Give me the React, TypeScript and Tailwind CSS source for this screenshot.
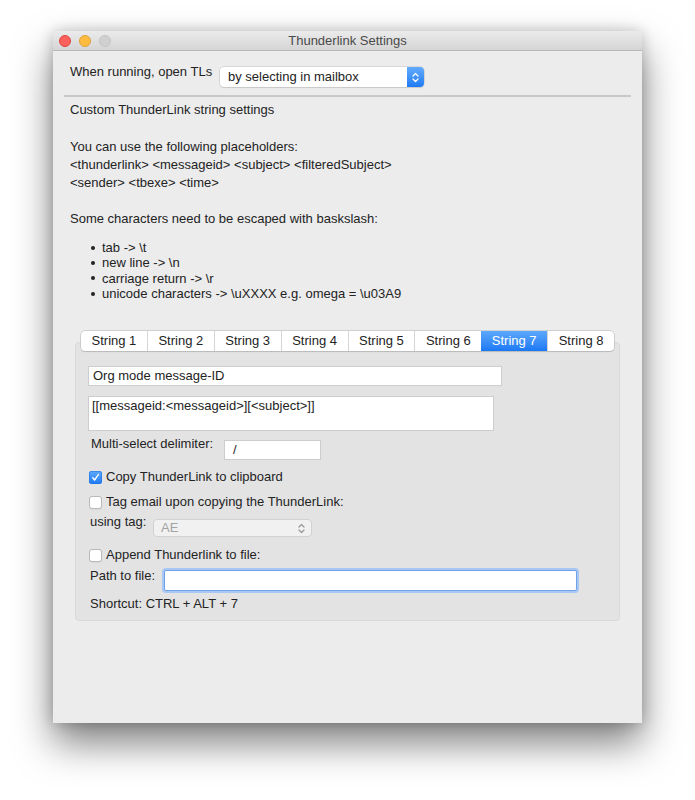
import React from "react";

const tabs = ["String 1", "String 2", "String 3", "String 4", "String 5", "String 6", "String 7", "String 8"];

const escapes = [
  "tab -> \\t",
  "new line -> \\n",
  "carriage return -> \\r",
  "unicode characters -> \\uXXXX e.g. omega = \\u03A9",
];

function Chevrons({ color }: { color: string }) {
  return (
    <svg width="7" height="11" viewBox="0 0 7 11" fill="none" stroke={color} strokeWidth="1.3" strokeLinecap="round" strokeLinejoin="round">
      <path d="M1 4 L3.5 1.5 L6 4" />
      <path d="M1 7 L3.5 9.5 L6 7" />
    </svg>
  );
}

function Checkbox({ checked }: { checked?: boolean }) {
  if (checked) {
    return (
      <span className="flex h-[13px] w-[13px] items-center justify-center rounded-[3px] bg-gradient-to-b from-[#5fa9fb] to-[#1b7af4] shadow-[inset_0_0_0_0.5px_#1a6fe0]">
        <svg width="9" height="9" viewBox="0 0 9 9" fill="none" stroke="white" strokeWidth="1.4" strokeLinecap="round" strokeLinejoin="round">
          <path d="M1.8 4.8 L3.6 7 L7.4 1.6" />
        </svg>
      </span>
    );
  }
  return <span className="h-[13px] w-[13px] rounded-[3px] border border-[#b9b9b9] bg-white shadow-[0_0.5px_0.5px_rgba(0,0,0,0.08)]" />;
}

export default function App() {
  return (
    <div className="min-h-screen bg-white pl-[53px] pt-[31px] font-['Liberation_Sans',Arial,sans-serif] text-[13px] text-[#232323]">
      {/* window */}
      <div className="flex h-[692px] w-[589px] flex-col rounded-t-[5px] bg-[#ececec] shadow-[0_20px_38px_rgba(0,0,0,0.5),0_0_14px_rgba(0,0,0,0.2)]">
        {/* title bar */}
        <div className="grid h-[20px] grid-cols-[1fr_auto_1fr] items-center rounded-t-[5px] border-b border-[#b8b8b8] bg-gradient-to-b from-[#ebebeb] to-[#d5d5d5]">
          <div className="flex items-center gap-[8px] pl-[6px]">
            <span className="h-[12px] w-[12px] rounded-full border-[0.5px] border-[#e0443e] bg-[#fc605c]" />
            <span className="h-[12px] w-[12px] rounded-full border-[0.5px] border-[#dea236] bg-[#fdbc40]" />
            <span className="h-[12px] w-[12px] rounded-full border-[0.5px] border-[#c4c4c4] bg-[#d0d0d0]" />
          </div>
          <div className="leading-[16px] text-[#4a4a4a]">Thunderlink Settings</div>
          <div />
        </div>

        <div className="px-[11px]">
          {/* open mode row */}
          <div className="flex items-start pl-[6px] pt-[13px]">
            <span className="w-[150px] leading-[16px]">When running, open TLs</span>
            <div className="mt-[3px] flex h-[20px] w-[204px] overflow-hidden rounded-[4px] bg-white shadow-[0_0_0_0.5px_#c2c2c2,0_1px_1px_rgba(0,0,0,0.12)]">
              <span className="flex-1 pl-[8px] leading-[20px]">by selecting in mailbox</span>
              <span className="flex w-[17px] items-center justify-center bg-gradient-to-b from-[#62abfb] to-[#1c7af5]">
                <Chevrons color="white" />
              </span>
            </div>
          </div>

          <div className="mt-[8px] h-[2px] w-[567px] bg-[#c9c9c9]" />

          {/* help text */}
          <div className="pl-[6px]">
            <p className="mt-[5px] leading-[16px]">Custom ThunderLink string settings</p>
            <div className="mt-[20px] leading-[18px]">
              <p>You can use the following placeholders:</p>
              <p>&lt;thunderlink&gt; &lt;messageid&gt; &lt;subject&gt; &lt;filteredSubject&gt;</p>
              <p>&lt;sender&gt; &lt;tbexe&gt; &lt;time&gt;</p>
            </div>
            <p className="mt-[18px] leading-[18px]">Some characters need to be escaped with baskslash:</p>
            <ul className="mt-[12px] pl-[21px] leading-[15.3px]">
              {escapes.map((e) => (
                <li key={e} className="flex items-center gap-[7px]">
                  <span className="h-[4px] w-[4px] rounded-full bg-[#232323]" />
                  <span>{e}</span>
                </li>
              ))}
            </ul>
          </div>

          {/* tabs */}
          <div className="ml-[11px] mt-[30px] w-[545px]">
            <div className="relative z-10 mx-auto flex h-[20px] w-[533px] overflow-hidden rounded-[4px] bg-white shadow-[0_0_0_0.5px_#b3b3b3,0_1px_1px_rgba(0,0,0,0.15)]">
              {tabs.map((t, i) => (
                <div
                  key={t}
                  className={
                    t === "String 7"
                      ? "flex flex-1 items-center justify-center bg-gradient-to-b from-[#5ca8fb] to-[#1a78f4] text-white"
                      : i === 0
                        ? "flex flex-1 items-center justify-center"
                        : "flex flex-1 items-center justify-center border-l border-[#d6d6d6]"
                  }
                >
                  {t}
                </div>
              ))}
            </div>

            {/* tab panel */}
            <div className="-mt-[9px] rounded-[4px] border border-[#d9d9d9] bg-[#e3e3e3] pb-[8px] pl-[12px] pt-[23px]">
              <div className="h-[20px] w-[414px] border border-[#cdcdcd] bg-white pl-[4px] leading-[18px]">Org mode message-ID</div>
              <div className="mt-[10px] h-[35px] w-[406px] border border-[#cdcdcd] bg-white pl-[3px] pt-[1px] leading-[16px]">
                [[messageid:&lt;messageid&gt;][&lt;subject&gt;]]
              </div>

              <div className="mt-[5px] flex items-start">
                <span className="w-[136px] pl-[3px] leading-[16px]">Multi-select delimiter:</span>
                <div className="mt-[4px] h-[20px] w-[97px] border border-[#cdcdcd] bg-white pl-[8px] leading-[18px]">/</div>
              </div>

              <div className="mt-[9px] flex h-[16px] items-center gap-[4px] pl-[1px]">
                <Checkbox checked />
                <span>Copy ThunderLink to clipboard</span>
              </div>
              <div className="mt-[9px] flex h-[16px] items-center gap-[4px] pl-[1px]">
                <Checkbox />
                <span>Tag email upon copying the ThunderLink:</span>
              </div>

              <div className="mt-[4px] flex items-start">
                <span className="w-[65px] pl-[2px] leading-[16px]">using tag:</span>
                <div className="mt-[5px] flex h-[18px] w-[159px] items-center justify-between rounded-[4px] border border-[#d2d2d2] bg-[#f1f1f1] pl-[7px] pr-[6px] text-[#a3a3a3]">
                  <span>AE</span>
                  <Chevrons color="#9a9a9a" />
                </div>
              </div>

              <div className="mt-[10px] flex h-[16px] items-center gap-[4px] pl-[1px]">
                <Checkbox />
                <span>Append Thunderlink to file:</span>
              </div>

              <div className="mt-[5px] flex items-start">
                <span className="w-[76px] pl-[2px] leading-[16px]">Path to file:</span>
                <div className="mt-[2px] h-[21px] w-[413px] rounded-[2px] border border-[#6ea1e8] bg-white shadow-[0_0_0_2px_#a8c8f3]" />
              </div>

              <p className="mt-[5px] pl-[2px] leading-[16px]">Shortcut: CTRL + ALT + 7</p>
            </div>
          </div>
        </div>
      </div>
    </div>
  );
}
